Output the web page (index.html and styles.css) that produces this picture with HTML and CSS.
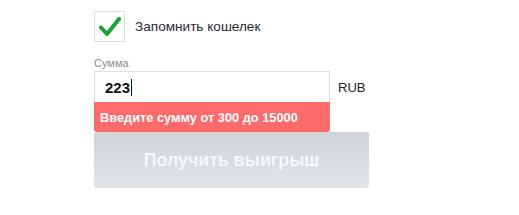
FILE: index.html
```html
<!DOCTYPE html>
<html lang="ru">
<head>
<meta charset="utf-8">
<link rel="stylesheet" href="styles.css">
</head>
<body>
<div class="form">
  <label class="remember">
    <span class="checkbox">
      <svg width="22" height="20" viewBox="0 0 22 20"><path d="M2 10.5 L8 17 L20 2" fill="none" stroke="#17a33a" stroke-width="4" stroke-linecap="round" stroke-linejoin="round"/></svg>
    </span>
    <span class="remember-text">Запомнить кошелек</span>
  </label>
  <div class="field-label">Сумма</div>
  <div class="amount-row">
    <div class="amount-col">
      <div class="input"><span class="value">223</span><span class="caret"></span></div>
      <div class="error">Введите сумму от 300 до 15000</div>
    </div>
    <span class="currency">RUB</span>
  </div>
  <button class="submit">Получить выигрыш</button>
</div>
</body>
</html>
```
FILE: styles.css
```css
html, body { margin: 0; padding: 0; background: #fff; }
body { font-family: "Liberation Sans", Arial, sans-serif; }
.form { padding: 11px 0 0 94px; }
.remember { display: flex; align-items: center; height: 31px; }
.checkbox {
  width: 29px; height: 29px; border: 1px solid #dcdcdc; background: #fff;
  display: flex; align-items: center; justify-content: center; box-sizing: content-box;
}
.checkbox svg { margin-top: 1px; }
.remember-text { margin-left: 10px; font-size: 13.6px; color: #2a2a35; }
.field-label { margin-top: 14px; font-size: 11px; color: #8a8d91; height: 14px; line-height: 14px; }
.amount-row { display: flex; align-items: flex-start; margin-top: 1px; }
.amount-col { width: 236px; }
.input {
  height: 30px; border: 1px solid #dedede; border-bottom: none; box-sizing: content-box;
  display: flex; align-items: center; padding-left: 10px;
}
.value { font-size: 15px; font-weight: bold; color: #111; }
.caret { display: inline-block; width: 1px; height: 17px; background: #111; margin-left: 1px; }
.error {
  height: 30px; background: #ff6b6b; color: #fff; font-size: 12.8px; font-weight: bold;
  display: flex; align-items: center; padding-left: 6px; border-radius: 0 0 3px 3px;
}
.currency { margin-left: 8px; margin-top: 9px; font-size: 13px; color: #222; }
.submit {
  display: block; width: 275px; height: 56px; border: none; border-radius: 3px;
  background: linear-gradient(#ced3d8, #e2e5e8);
  color: #f5f7f8; font-family: "Liberation Sans", Arial, sans-serif;
  font-size: 17.8px; font-weight: bold; padding: 0; margin: 0;
}
```
